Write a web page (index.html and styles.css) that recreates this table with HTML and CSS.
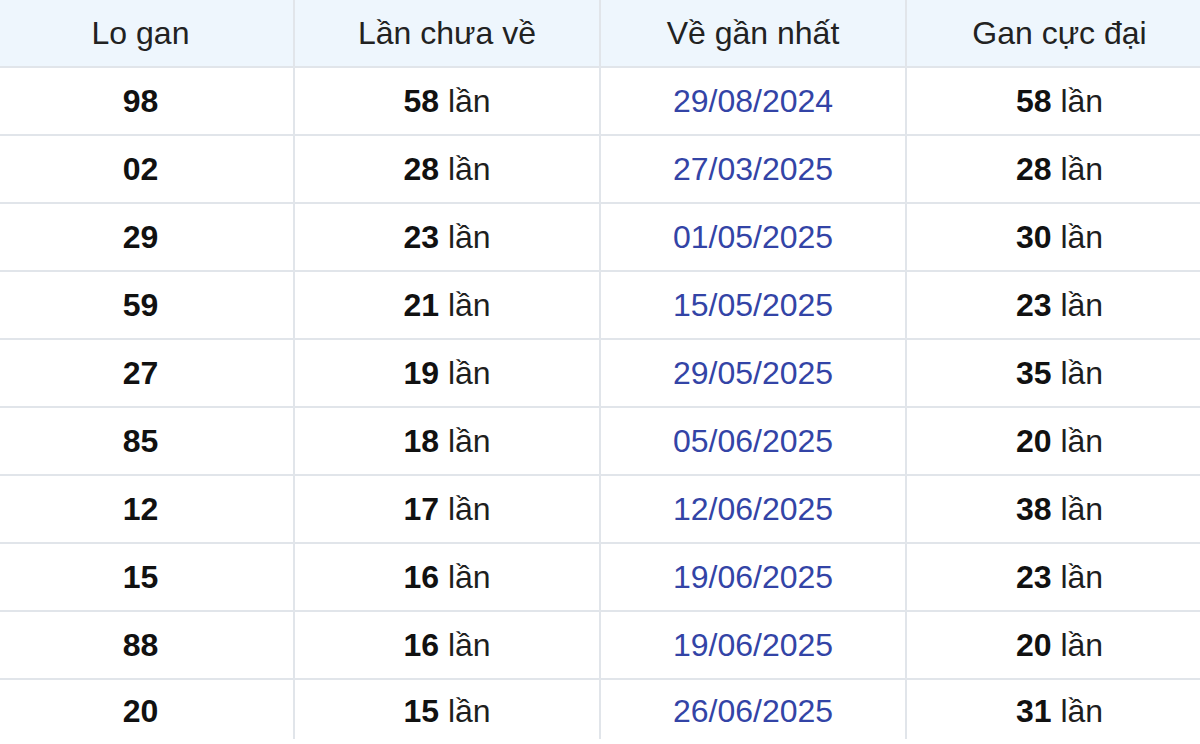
FILE: index.html
```html
<!DOCTYPE html>
<html lang="vi">
<head>
<meta charset="utf-8">
<title>Lo gan</title>
<link rel="stylesheet" href="styles.css">
</head>
<body>
<table class="gan-table">
  <colgroup>
    <col class="col"><col class="col"><col class="col"><col class="col">
  </colgroup>
  <thead>
    <tr><th>Lo gan</th><th>Lần chưa về</th><th>Về gần nhất</th><th>Gan cực đại</th></tr>
  </thead>
  <tbody>
    <tr><td class="num">98</td><td><b>58</b> lần</td><td class="date">29/08/2024</td><td><b>58</b> lần</td></tr>
    <tr><td class="num">02</td><td><b>28</b> lần</td><td class="date">27/03/2025</td><td><b>28</b> lần</td></tr>
    <tr><td class="num">29</td><td><b>23</b> lần</td><td class="date">01/05/2025</td><td><b>30</b> lần</td></tr>
    <tr><td class="num">59</td><td><b>21</b> lần</td><td class="date">15/05/2025</td><td><b>23</b> lần</td></tr>
    <tr><td class="num">27</td><td><b>19</b> lần</td><td class="date">29/05/2025</td><td><b>35</b> lần</td></tr>
    <tr><td class="num">85</td><td><b>18</b> lần</td><td class="date">05/06/2025</td><td><b>20</b> lần</td></tr>
    <tr><td class="num">12</td><td><b>17</b> lần</td><td class="date">12/06/2025</td><td><b>38</b> lần</td></tr>
    <tr><td class="num">15</td><td><b>16</b> lần</td><td class="date">19/06/2025</td><td><b>23</b> lần</td></tr>
    <tr><td class="num">88</td><td><b>16</b> lần</td><td class="date">19/06/2025</td><td><b>20</b> lần</td></tr>
    <tr class="last"><td class="num">20</td><td><b>15</b> lần</td><td class="date">26/06/2025</td><td><b>31</b> lần</td></tr>
  </tbody>
</table>
</body>
</html>
```
FILE: styles.css
```css
html, body {
  margin: 0;
  padding: 0;
  background: #ffffff;
  overflow: hidden;
}
body {
  width: 1200px;
  height: 744px;
  font-family: "Liberation Sans", Arial, sans-serif;
  color: #1e1e1e;
}
.gan-table {
  width: 1224px;
  margin-left: -12px;
  border-collapse: collapse;
  table-layout: fixed;
  font-size: 32px;
}
.col { width: 306px; }
.gan-table th,
.gan-table td {
  height: 66px;
  padding: 0;
  text-align: center;
  vertical-align: middle;
  border: 2px solid #e1e5ea;
  line-height: 1;
}
.gan-table tr > :first-child { border-left: none; }
.gan-table tr > :last-child { border-right: none; }
.gan-table thead th {
  border-top: none;
  background: #eef6fd;
  font-weight: normal;
  color: #222222;
}
.gan-table b { font-weight: bold; color: #111111; }
.gan-table .num { font-weight: bold; color: #111111; }
.gan-table .date { color: #3344a6; }
.gan-table tr.last td { border-bottom: none; height: 57px; padding-top: 2px; }
```
